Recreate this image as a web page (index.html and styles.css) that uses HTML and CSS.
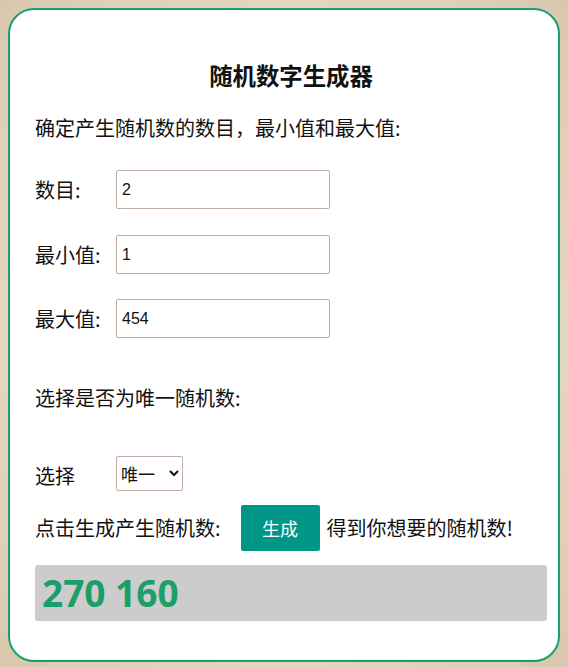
FILE: index.html
```html
<!DOCTYPE html>
<html lang="zh-CN">
<head>
  <meta charset="UTF-8">
  <title>随机数字生成器</title>
  <link rel="stylesheet" href="styles.css">
</head>
<body>
  <div class="card">
    <h3>随机数字生成器</h3>
    <p class="intro">确定产生随机数的数目，最小值和最大值:</p>

    <div class="row first">
      <label for="count">数目:</label>
      <input type="text" id="count" value="2">
    </div>
    <div class="row">
      <label for="min">最小值:</label>
      <input type="text" id="min" value="1">
    </div>
    <div class="row last">
      <label for="max">最大值:</label>
      <input type="text" id="max" value="454">
    </div>

    <p class="question">选择是否为唯一随机数:</p>

    <div class="choose">
      <label for="unique">选择</label>
      <select id="unique">
        <option>唯一</option>
        <option>重复</option>
      </select>
    </div>

    <div class="action">
      <span>点击生成产生随机数:</span>
      <button type="button">生成</button>
      <span>得到你想要的随机数!</span>
    </div>

    <div class="result">270 160</div>
  </div>
</body>
</html>
```

FILE: styles.css
```css
body {
  margin: 8px;
  font-family: "Noto Sans CJK SC", "Noto Sans", sans-serif;
  font-size: 20px;
  color: #111;
  background: radial-gradient(ellipse at center, #f1e9d8 0%, #e6dac3 60%, #d8c7ad 100%);
  min-height: 651px;
}
.card {
  background: #fff;
  border: 2px solid #1b9e6c;
  border-radius: 26px;
  padding: 10px 11px 39px 25px;
}
h3 {
  font-size: 23.4px;
  line-height: 30px;
  text-align: center;
  margin: 40px 0 23px;
}
p {
  margin: 0;
  line-height: 30px;
}
.row {
  display: flex;
  align-items: center;
  margin-top: 26px;
}
.row.first {
  margin-top: 27px;
}
.row.last {
  margin-top: 25px;
}
.row label, .choose label {
  width: 81px;
  line-height: 30px;
}
input[type="text"] {
  width: 214px;
  height: 39px;
  box-sizing: border-box;
  border: 1px solid #c2ada2;
  border-radius: 2px;
  padding: 0 5px;
  font-family: "Liberation Sans", Arial, sans-serif;
  font-size: 16px;
  color: #111;
}
.question {
  margin-top: 45px;
}
.choose {
  display: flex;
  align-items: flex-end;
  margin-top: 43px;
}
select {
  width: 67px;
  height: 35px;
  border: 1px solid #c2ada2;
  border-radius: 2px;
  background: #fff;
  font-family: "Noto Sans CJK SC", sans-serif;
  font-size: 17px;
  color: #111;
}
.action {
  display: flex;
  align-items: center;
  margin-top: 14px;
  line-height: 30px;
}
button {
  width: 79px;
  height: 46px;
  margin: 0 7px 0 20px;
  border: none;
  border-radius: 2px;
  background: #009688;
  color: #fff;
  font-family: "Noto Sans CJK SC", sans-serif;
  font-size: 18px;
}
.result {
  margin-top: 14px;
  height: 56px;
  background: #cccccc;
  border-radius: 3px;
  padding-left: 7px;
  font-family: "Open Sans", "Noto Sans", sans-serif;
  font-weight: bold;
  font-size: 37px;
  line-height: 56px;
  color: #1a9e6a;
}
```
